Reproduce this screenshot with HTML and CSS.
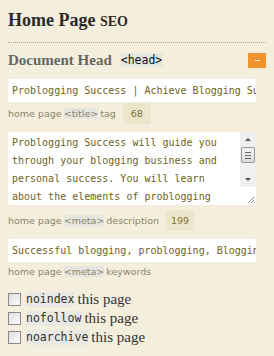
FILE: index.html
```html
<!DOCTYPE html>
<html>
<head>
<meta charset="utf-8">
<link rel="stylesheet" href="styles.css">
</head>
<body>
<div class="panel">
  <h2 class="title">Home Page <span class="sc">SEO</span></h2>
  <div class="section-head">
    <h3 class="section-title">Document Head <code class="tag">&lt;head&gt;</code></h3>
    <span class="toggle"><span class="dash"></span></span>
  </div>
  <div class="field first">
    <div class="input">Problogging Success | Achieve Blogging Success</div>
    <div class="label">home page <code class="ltag">&lt;title&gt;</code> tag <span class="count">68</span></div>
  </div>
  <div class="field area">
    <div class="textarea">
      <div class="ta-text">Problogging Success will guide you<br>through your blogging business and<br>personal success. You will learn<br>about the elements of problogging</div>
      <div class="scroll">
        <div class="sb-up"></div>
        <div class="sb-thumb"><i></i><i></i><i></i></div>
        <div class="sb-fill"></div>
        <div class="sb-down"></div>
        <div class="sb-grip"></div>
      </div>
    </div>
    <div class="label">home page <code class="ltag">&lt;meta&gt;</code> description <span class="count">199</span></div>
  </div>
  <div class="field last">
    <div class="input">Successful blogging, problogging, Blogging tips</div>
    <div class="label plain">home page <code class="ltag">&lt;meta&gt;</code> keywords</div>
  </div>
  <ul class="checks">
    <li><span class="cb"></span><code class="opt">noindex</code> this page</li>
    <li><span class="cb"></span><code class="opt">nofollow</code> this page</li>
    <li><span class="cb"></span><code class="opt">noarchive</code> this page</li>
  </ul>
</div>
</body>
</html>
```
FILE: styles.css
```css
html, body {
  margin: 0;
  padding: 0;
  background: #f4efdc;
}
.panel {
  width: 258px;
  padding: 0 8px;
}
.title {
  margin: 0;
  padding-top: 10px;
  padding-bottom: 10px;
  font-family: "Liberation Serif", serif;
  font-weight: bold;
  font-size: 18px;
  line-height: 20px;
  color: #2a2a2a;
  border-bottom: 1px dotted #b5a970;
}
.title .sc {
  font-size: 14px;
}
.section-head {
  display: flex;
  justify-content: space-between;
  align-items: center;
  margin-top: 9px;
  height: 16px;
}
.section-title {
  margin: 0;
  font-family: "Liberation Serif", serif;
  font-weight: bold;
  font-size: 15px;
  color: #666;
  display: flex;
  align-items: center;
}
.tag {
  font-family: "DejaVu Sans Mono", monospace;
  font-weight: normal;
  font-size: 11.5px;
  line-height: 14px;
  color: #111;
  background: #e6e6e0;
  margin-left: 9px;
}
.toggle {
  width: 18px;
  height: 15px;
  background: #f0932b;
  display: flex;
  align-items: center;
  justify-content: center;
}
.dash {
  width: 5px;
  height: 1px;
  background: #fff;
}
.field {
  margin-top: 10px;
}
.field.first {
  margin-top: 11px;
}
.field.area {
  margin-top: 8px;
}
.field.last {
  margin-top: 8px;
}
.input {
  height: 23px;
  box-sizing: border-box;
  padding: 5px 4px;
  background: #fff;
  border-radius: 3px;
  font-family: "DejaVu Sans Mono", monospace;
  font-size: 10px;
  line-height: 13px;
  color: #6e6320;
  white-space: nowrap;
  overflow: hidden;
  width: 248px;
}
.label {
  display: flex;
  align-items: center;
  margin-top: 1px;
  height: 21px;
  font-family: "DejaVu Sans", sans-serif;
  font-size: 9.5px;
  color: #8c8468;
}
.label.plain {
  height: 16px;
}
.area .label {
  margin-top: 5px;
}
.ltag {
  font-family: "DejaVu Sans", sans-serif;
  font-size: 9.5px;
  background: #e6e6e0;
  margin: 0 2px;
}
.count {
  margin-left: 7px;
  width: 28px;
  height: 21px;
  display: flex;
  align-items: center;
  justify-content: center;
  background: #ebe5cb;
  border-radius: 3px;
  color: #7d7238;
}
.textarea {
  width: 248px;
  height: 73px;
  background: #fff;
  border-radius: 3px 0 0 3px;
  display: flex;
  overflow: hidden;
}
.ta-text {
  flex: 1;
  padding: 2px 4px;
  font-family: "DejaVu Sans Mono", monospace;
  font-size: 10px;
  line-height: 18px;
  color: #6e6320;
  white-space: nowrap;
  overflow: hidden;
}
.scroll {
  width: 16px;
  background: #f0f0f0;
  display: flex;
  flex-direction: column;
}
.sb-up, .sb-down {
  height: 15px;
  position: relative;
}
.sb-up::after, .sb-down::after {
  content: "";
  position: absolute;
  left: 5px;
  border-left: 3px solid transparent;
  border-right: 3px solid transparent;
}
.sb-up::after {
  top: 6px;
  border-bottom: 3px solid #555;
}
.sb-down::after {
  top: 6px;
  border-top: 3px solid #555;
}
.sb-thumb {
  height: 14px;
  margin: 0 1px;
  border: 1px solid #999;
  border-radius: 2px;
  background: linear-gradient(#f4f4f4, #dcdcdc);
  display: flex;
  flex-direction: column;
  justify-content: center;
  gap: 2px;
  align-items: center;
}
.sb-thumb i {
  width: 6px;
  height: 1px;
  background: #666;
}
.sb-fill {
  flex: 1;
}
.sb-grip {
  height: 18px;
  background: #fff;
  position: relative;
}
.sb-grip::after {
  content: "";
  position: absolute;
  right: 2px;
  bottom: 2px;
  width: 6px;
  height: 6px;
  background: linear-gradient(135deg, transparent 45%, #888 45%, #888 55%, transparent 55%, transparent 70%, #888 70%, #888 80%, transparent 80%);
}
.checks {
  list-style: none;
  margin: 11px 0 0;
  padding: 0;
}
.checks li {
  display: flex;
  align-items: center;
  height: 19px;
  font-family: "Liberation Serif", serif;
  font-size: 15px;
  color: #333;
}
.cb {
  width: 11px;
  height: 11px;
  border: 1px solid #8a8a8a;
  background: linear-gradient(135deg, #dedede, #fbfbfb);
  margin-right: 5px;
}
.opt {
  font-family: "DejaVu Sans Mono", monospace;
  font-size: 11.5px;
  line-height: 15px;
  color: #333;
  background: #e8e8e4;
  margin-right: 3px;
}
```
